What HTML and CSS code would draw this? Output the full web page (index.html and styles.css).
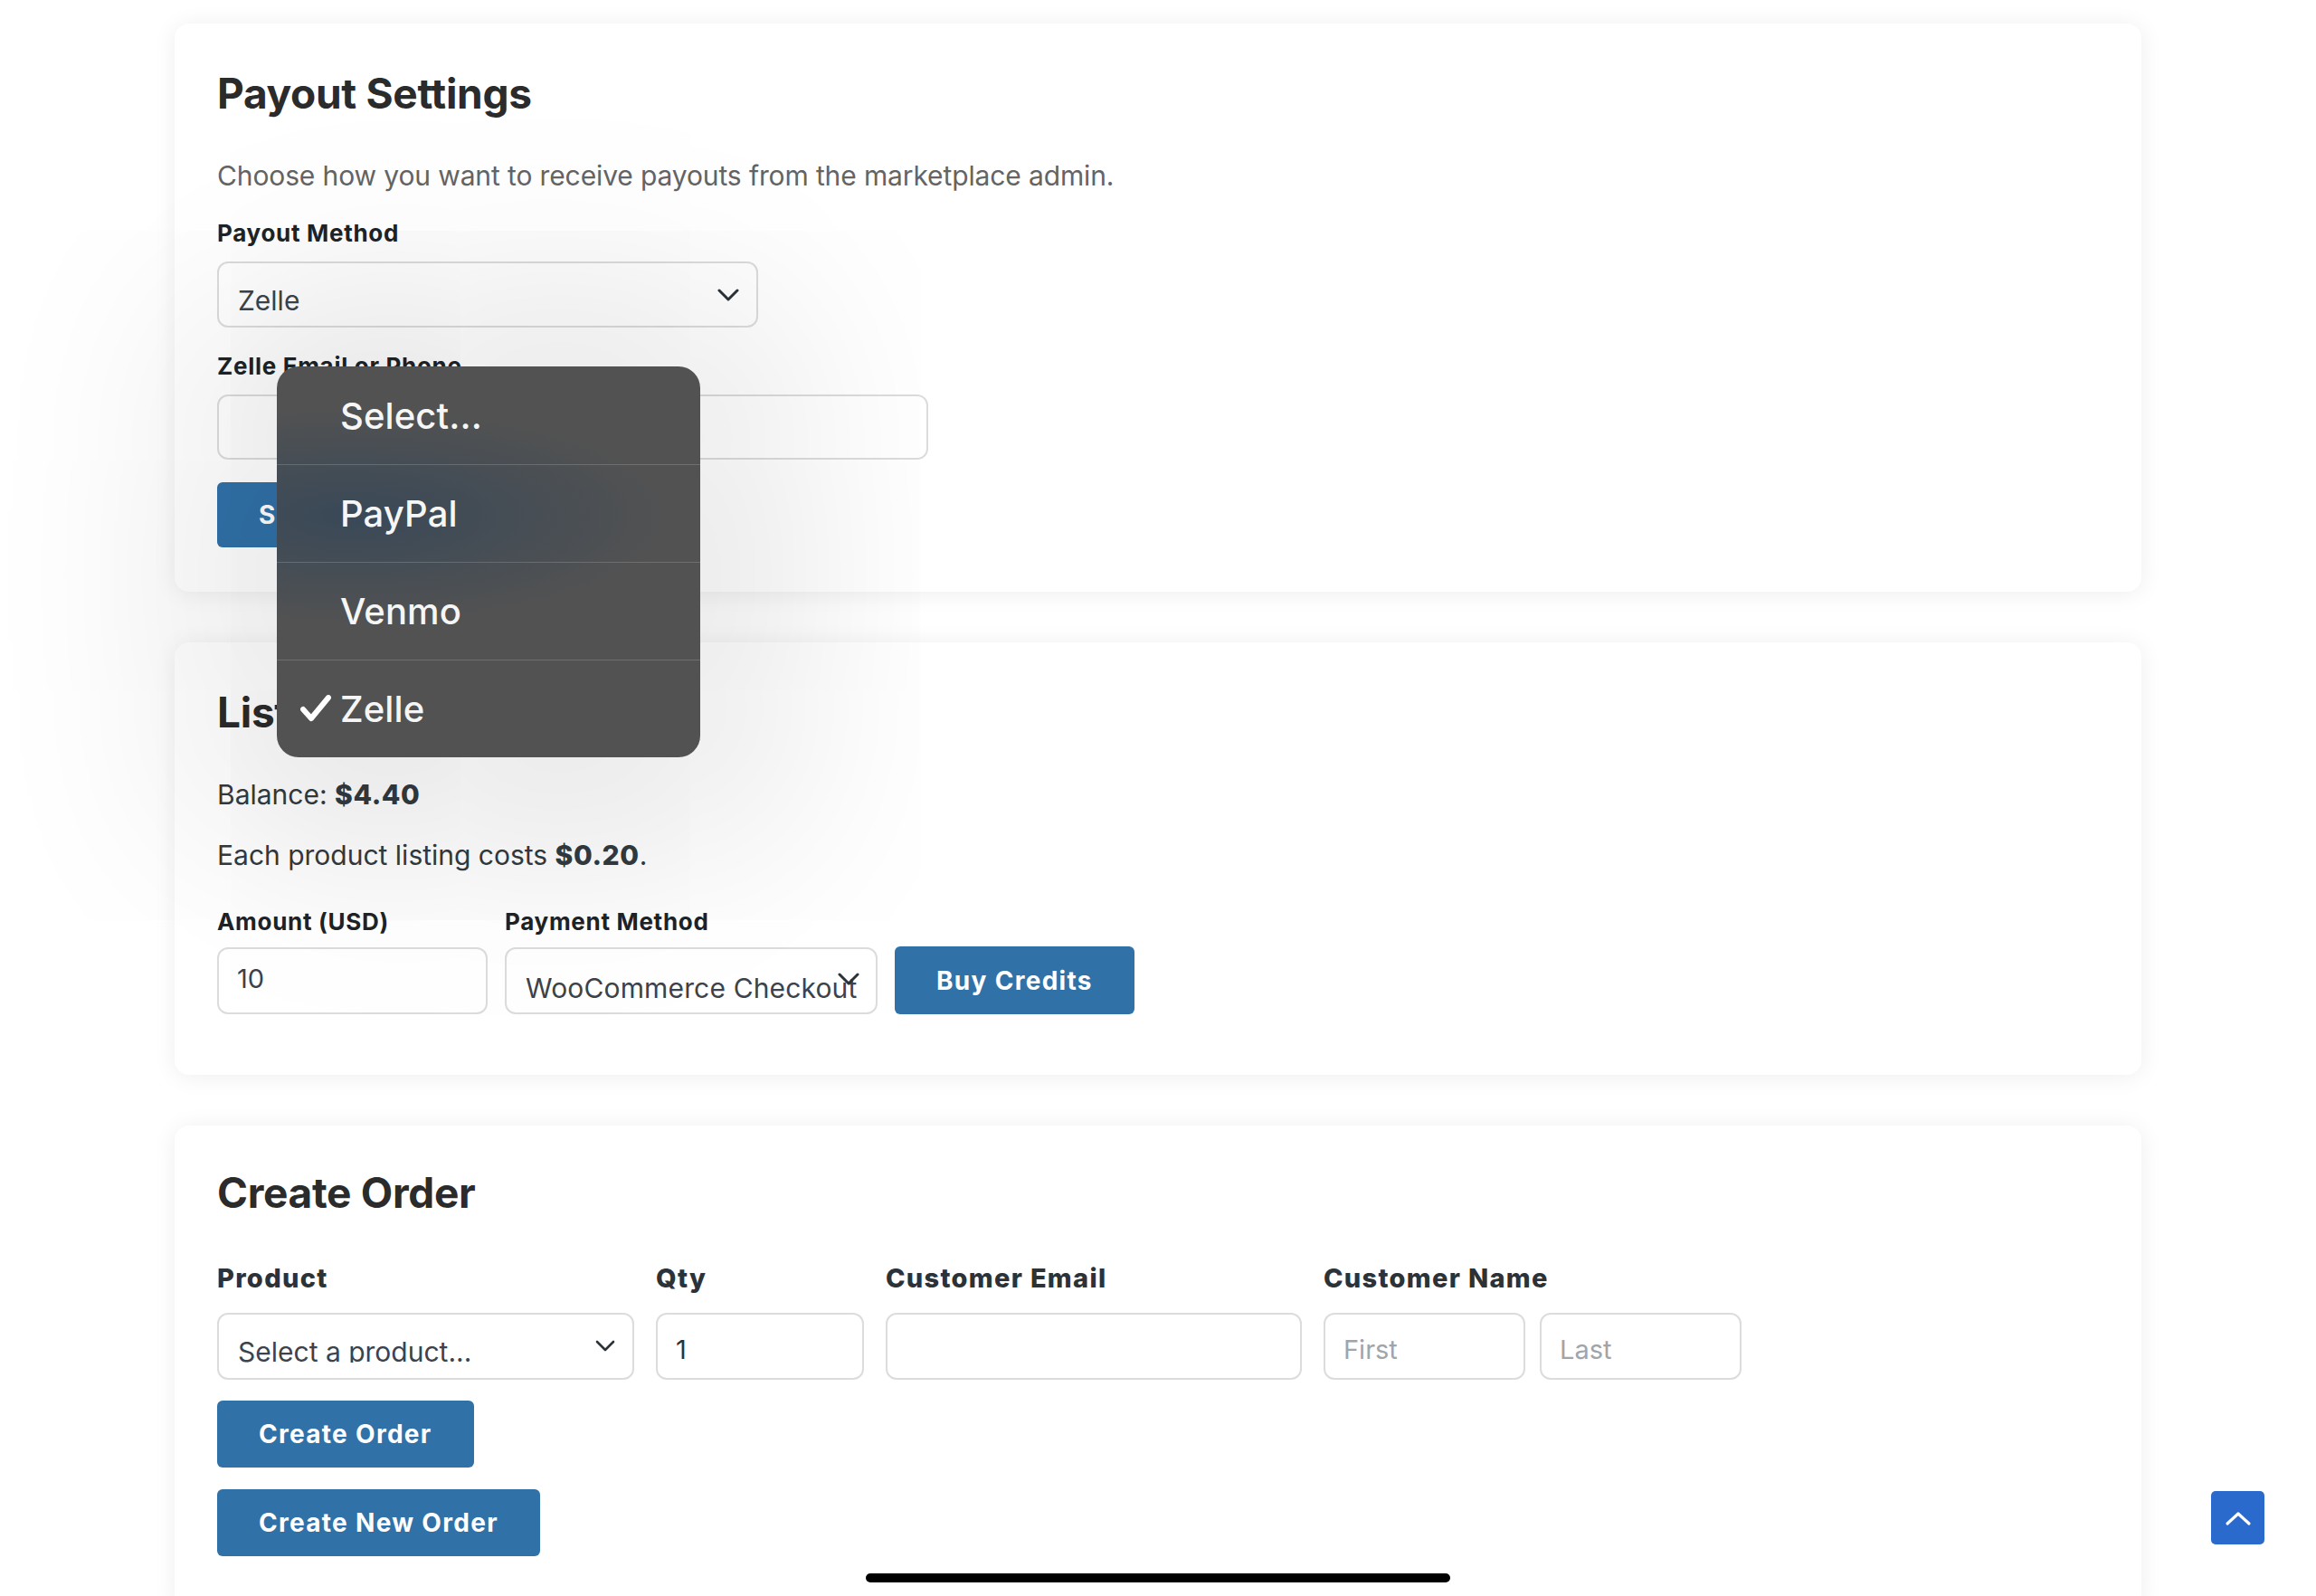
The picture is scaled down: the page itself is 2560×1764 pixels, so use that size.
FILE: index.html
```html
<!DOCTYPE html>
<html lang="en">
<head>
<meta charset="utf-8">
<title>Vendor Dashboard</title>
<link rel="stylesheet" href="styles.css">
</head>
<body>
<main class="page">

  <!-- Payout settings, with the native picker of the method select open -->
  <section class="card card-payout">
    <h2 class="card-title">Payout Settings</h2>
    <p class="lead">Choose how you want to receive payouts from the marketplace admin.</p>

    <label class="field-label">Payout Method</label>
    <div class="select-box select-method">
      <span class="select-value">Zelle</span>
      <svg class="chevron" width="24" height="15" viewBox="0 0 24 15" aria-hidden="true"><polyline points="2,2 12,12 22,2"/></svg>
    </div>

    <label class="field-label label-spaced">Zelle Email or Phone</label>
    <input class="text-input input-contact" type="text">

    <button class="btn btn-save" type="button">Save Payout Settings</button>

    <div class="picker" role="listbox">
      <div class="picker-item" role="option">Select...</div>
      <div class="picker-item" role="option">PayPal</div>
      <div class="picker-item" role="option">Venmo</div>
      <div class="picker-item is-checked" role="option" aria-selected="true">
        <svg class="check" width="34" height="30" viewBox="0 0 34 30" aria-hidden="true"><polyline points="3,16 12,26 31,3"/></svg>
        Zelle
      </div>
    </div>
  </section>

  <!-- Listing credits -->
  <section class="card card-credits">
    <h2 class="card-title">Listing Credits</h2>
    <p class="info info-balance">Balance: <strong>$4.40</strong></p>
    <p class="info info-cost">Each product listing costs <strong>$0.20</strong>.</p>

    <div class="credit-row">
      <div class="field field-amount">
        <label class="field-label">Amount (USD)</label>
        <input class="text-input input-amount" type="text" value="10">
      </div>
      <div class="field field-gateway">
        <label class="field-label">Payment Method</label>
        <div class="select-box select-gateway">
          <span class="select-value">WooCommerce Checkout</span>
          <svg class="chevron" width="24" height="15" viewBox="0 0 24 15" aria-hidden="true"><polyline points="2,2 12,12 22,2"/></svg>
        </div>
      </div>
      <button class="btn btn-buy" type="button">Buy Credits</button>
    </div>
  </section>

  <!-- Create order -->
  <section class="card card-order">
    <h2 class="card-title">Create Order</h2>

    <div class="order-row">
      <div class="field field-product">
        <label class="field-label label-order">Product</label>
        <div class="select-box select-product">
          <span class="select-value">Select a product...</span>
          <svg class="chevron chevron-sm" width="22" height="14" viewBox="0 0 22 14" aria-hidden="true"><polyline points="2,2 11,11 20,2"/></svg>
        </div>
      </div>
      <div class="field field-qty">
        <label class="field-label label-order">Qty</label>
        <input class="text-input input-order" type="text" value="1">
      </div>
      <div class="field field-email">
        <label class="field-label label-order">Customer Email</label>
        <input class="text-input input-order" type="text">
      </div>
      <div class="field field-name">
        <label class="field-label label-order">Customer Name</label>
        <div class="name-pair">
          <input class="text-input input-order" type="text" placeholder="First">
          <input class="text-input input-order" type="text" placeholder="Last">
        </div>
      </div>
    </div>

    <button class="btn btn-order" type="button">Create Order</button>
    <button class="btn btn-order btn-new" type="button">Create New Order</button>
  </section>

</main>

<button class="to-top" type="button" aria-label="Back to top">
  <svg width="30" height="18" viewBox="0 0 30 18" aria-hidden="true"><polyline points="3,15 15,4 27,15"/></svg>
</button>
<div class="home-indicator"></div>
</body>
</html>
```

FILE: styles.css
```css
* {
  box-sizing: border-box;
}

html,
body {
  margin: 0;
  background: #ffffff;
}

body {
  font-family: Inter, "Noto Sans", "Liberation Sans", sans-serif;
  color: #2c3338;
  overflow: hidden;
}

.page {
  width: 2174px;
  margin: 0 auto;
  padding-top: 26px;
  display: flex;
  flex-direction: column;
  gap: 56px;
}

/* ---------- cards ---------- */

.card {
  background: #ffffff;
  border-radius: 16px;
  box-shadow: 0 2px 26px rgba(0, 0, 0, 0.07);
  padding: 49px 47px;
  display: flex;
  flex-direction: column;
  align-items: flex-start;
}

.card-payout {
  position: relative;
}

.card-credits {
  padding-bottom: 67px;
}

.card-order {
  padding-top: 46px;
  padding-bottom: 60px;
}

.card-title {
  margin: 0;
  font-size: 46px;
  line-height: 56px;
  font-weight: 700;
  color: #2b2b2b;
  letter-spacing: -0.3px;
}

.lead {
  margin: 43px 0 0;
  font-size: 30px;
  line-height: 40px;
  color: #646464;
  letter-spacing: -0.12px;
}

.info {
  margin: 0;
  font-size: 30px;
  line-height: 40px;
  color: #333a40;
}

.info strong {
  font-weight: 800;
  letter-spacing: 0.6px;
}

.info-balance {
  margin-top: 43px;
}

.info-cost {
  margin-top: 27px;
}

/* ---------- form parts ---------- */

.field-label {
  display: block;
  margin-top: 27px;
  font-size: 26px;
  line-height: 34px;
  font-weight: 700;
  color: #1d2327;
  letter-spacing: 0.7px;
}

.label-spaced {
  margin-top: 26px;
}

.text-input,
.select-box {
  display: block;
  height: 72px;
  margin-top: 14px;
  border: 2px solid #dcdcde;
  border-radius: 12px;
  background: #ffffff;
  font-family: inherit;
  font-size: 28px;
  color: #3c434a;
  padding: 0 20px;
  outline: none;
}

.select-box {
  position: relative;
  height: 73px;
  padding: 0 21px;
}

.select-value {
  display: block;
  margin-top: 23px;
  height: 30px;
  overflow: hidden;
  font-size: 30px;
  line-height: 36px;
  white-space: nowrap;
  color: #3c434a;
}

.chevron {
  position: absolute;
  right: 19px;
  top: 50%;
  margin-top: -7px;
  fill: none;
  stroke: #2c3338;
  stroke-width: 3;
  stroke-linecap: round;
  stroke-linejoin: round;
}

.chevron-sm {
  stroke-width: 2.6;
}

.select-method {
  width: 598px;
}

.input-contact {
  width: 786px;
}

.btn {
  display: block;
  height: 72px;
  border: 0;
  border-radius: 6px;
  background: #3071a8;
  color: #ffffff;
  font-family: inherit;
  font-size: 28px;
  font-weight: 700;
  letter-spacing: 1.3px;
  padding: 0 46px;
  cursor: pointer;
}

.btn-save {
  margin-top: 25px;
}

/* ---------- credits row ---------- */

.credit-row {
  display: flex;
  align-items: flex-end;
  gap: 19px;
  margin-top: 37px;
}

.credit-row .field-label {
  margin-top: 0;
}

.credit-row .text-input,
.credit-row .select-box {
  height: 74px;
  margin-top: 11px;
}

.field-amount .text-input {
  width: 299px;
}

.input-amount {
  font-size: 29px;
  padding-bottom: 6px;
  color: #3c434a;
}

.select-gateway {
  width: 412px;
}

.select-gateway .select-value {
  margin-top: 25px;
  letter-spacing: 0.15px;
}

.select-gateway .chevron {
  right: 18px;
  margin-top: -9px;
}

.btn-buy {
  height: 75px;
}

/* ---------- order row ---------- */

.order-row {
  display: flex;
  margin-top: 49px;
}

.order-row .field + .field {
  margin-left: 24px;
}

.label-order {
  margin-top: 0;
  font-size: 29px;
  line-height: 36px;
  font-weight: 800;
  color: #2c3338;
  letter-spacing: 1.3px;
}

.field-product .select-box {
  width: 461px;
  height: 74px;
  margin-top: 20px;
}

.field-product .chevron {
  right: 19px;
}

.input-order {
  height: 74px;
  margin-top: 20px;
  font-size: 29px;
  padding: 6px 20px 0;
  color: #2c3338;
}

.input-order::placeholder {
  color: #a0a5aa;
}

.field-qty .input-order {
  width: 230px;
}

.field-email .input-order {
  width: 460px;
}

.name-pair {
  display: flex;
  gap: 16px;
}

.name-pair .input-order {
  width: 223px;
}

.btn-order {
  height: 74px;
  margin-top: 23px;
}

.btn-new {
  margin-top: 24px;
}

/* ---------- open picker (drawn over the page) ---------- */

.picker {
  position: absolute;
  left: 113px;
  top: 379px;
  width: 468px;
  border-radius: 24px;
  overflow: hidden;
  z-index: 10;
  /* dark material, tinted where the blue save button sits beneath it */
  background:
    radial-gradient(ellipse 360px 120px at 80px 165px, rgba(56, 72, 88, 0.95), rgba(56, 72, 88, 0) 100%),
    #525252;
  box-shadow: 0 10px 240px 90px rgba(0, 0, 0, 0.11);
}

.picker-item {
  position: relative;
  height: 108px;
  display: flex;
  align-items: center;
  padding-left: 70px;
  font-size: 40px;
  font-weight: 500;
  color: #f6f6f6;
  letter-spacing: 0.1px;
}

.picker-item + .picker-item {
  border-top: 1px solid rgba(255, 255, 255, 0.17);
}

.check {
  position: absolute;
  left: 26px;
  top: 38px;
  fill: none;
  stroke: #ffffff;
  stroke-width: 6;
  stroke-linecap: round;
  stroke-linejoin: round;
}

/* ---------- floating controls ---------- */

.to-top {
  position: fixed;
  right: 57px;
  bottom: 57px;
  width: 59px;
  height: 59px;
  border: 0;
  border-radius: 5px;
  background: #2b6acd;
  display: flex;
  align-items: center;
  justify-content: center;
  padding: 0;
}

.to-top svg {
  fill: none;
  stroke: #ffffff;
  stroke-width: 3.2;
  stroke-linecap: round;
  stroke-linejoin: round;
}

.home-indicator {
  position: fixed;
  left: 50%;
  bottom: 15px;
  width: 646px;
  height: 10px;
  margin-left: -323px;
  border-radius: 5px;
  background: #000000;
}
```
